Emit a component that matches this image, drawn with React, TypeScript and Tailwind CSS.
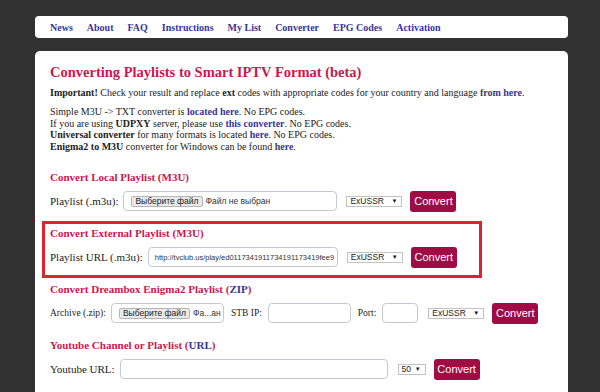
import React from "react";

const navItems = ["News", "About", "FAQ", "Instructions", "My List", "Converter", "EPG Codes", "Activation"];

const SANS = "font-['Liberation_Sans',Arial,sans-serif]";

function Link({ children }: { children: React.ReactNode }) {
  return <span className="font-bold text-[#36369a]">{children}</span>;
}

function Heading({ children, className = "" }: { children: React.ReactNode; className?: string }) {
  return <h3 className={`text-[11px] leading-[14px] font-bold text-[#c5194f] ${className}`}>{children}</h3>;
}

function FileInput({ width, note }: { width: string; note: string }) {
  return (
    <div className={`${width} ${SANS} h-[20px] flex items-center rounded-[4px] border border-[#c3cbd2] bg-white pl-[7px] overflow-hidden`}>
      <div className="h-[11px] flex items-center px-[3px] bg-[#e9e9e9] border border-[#b5b5b5] rounded-[2px] text-[8.5px] text-[#222] whitespace-nowrap">
        Выберите файл
      </div>
      <span className="ml-[3px] text-[8.5px] text-[#333] whitespace-nowrap">{note}</span>
    </div>
  );
}

function TextInput({ width, value = "" }: { width: string; value?: string }) {
  return (
    <div className={`${width} ${SANS} h-[20px] flex items-center rounded-[4px] border border-[#c3cbd2] bg-white px-[6px] overflow-hidden`}>
      <span className="text-[7.5px] text-[#333] whitespace-nowrap">{value}</span>
    </div>
  );
}

function Select({ width, label }: { width: string; label: string }) {
  return (
    <div className={`${width} ${SANS} h-[11px] flex items-center justify-between border border-[#c2c2c2] bg-white pl-[3px] pr-[4px]`}>
      <span className="text-[8.5px] text-[#222] leading-none">{label}</span>
      <span className="text-[6px] text-[#111] leading-none">▼</span>
    </div>
  );
}

function ConvertButton() {
  return (
    <button className={`${SANS} w-[46px] h-[21px] rounded-[3px] bg-[#a00b43] text-white text-[11px] leading-none`}>
      Convert
    </button>
  );
}

export default function App() {
  return (
    <div className="min-h-screen bg-[#323232] pt-[16px] pl-[35px] text-[#222] font-['Liberation_Serif','Times_New_Roman',serif]">
      <nav className="w-[533px] h-[22px] bg-white rounded-[4px] flex items-center gap-[14px] pl-[15px]">
        {navItems.map((n) => (
          <span key={n} className="text-[10px] font-bold text-[#36369a]">{n}</span>
        ))}
      </nav>

      <main className="mt-[13px] w-[533px] bg-white rounded-t-[5px] pt-[12px] pl-[15px] pb-[30px]">
        <h1 className="text-[14.5px] leading-[18px] font-bold text-[#c5194f]">
          Converting Playlists to Smart IPTV Format (beta)
        </h1>
        <p className="mt-[6px] text-[10px] leading-[12px]">
          <b>Important!</b> Check your result and replace <b>ext</b> codes with appropriate codes for your country and language <Link>from here</Link>.
        </p>
        <div className="mt-[7px] text-[10px] leading-[11.7px]">
          <p>Simple M3U -&gt; TXT converter is <Link>located here</Link>. No EPG codes.</p>
          <p>If you are using <b>UDPXY</b> server, please use <Link>this converter</Link>. No EPG codes.</p>
          <p><b>Universal converter</b> for many formats is located <Link>here</Link>. No EPG codes.</p>
          <p><b>Enigma2 to M3U</b> converter for Windows can be found <Link>here</Link>.</p>
        </div>

        <Heading className="mt-[17px]">Convert Local Playlist (M3U)</Heading>
        <div className="mt-[7px] h-[21px] flex items-center text-[11px] whitespace-nowrap">
          <span className="mr-[5px]">Playlist (.m3u):</span>
          <FileInput width="w-[214px]" note="Файл не выбран" />
          <div className="ml-[9px]"><Select width="w-[56px]" label="ExUSSR" /></div>
          <div className="ml-[8px]"><ConvertButton /></div>
        </div>

        <div className="mt-[9px] -ml-[8px] w-[440px] border-[3px] border-[#e3202b] pl-[5px] pt-[2px] pb-[7px]">
          <Heading>Convert External Playlist (M3U)</Heading>
          <div className="mt-[7px] h-[21px] flex items-center text-[11px] whitespace-nowrap">
            <span className="mr-[5px]">Playlist URL (.m3u):</span>
            <TextInput width="w-[190px]" value="http://tvclub.us/play/ed0117341911734191173419fee9" />
            <div className="ml-[9px]"><Select width="w-[56px]" label="ExUSSR" /></div>
            <div className="ml-[8px]"><ConvertButton /></div>
          </div>
        </div>

        <Heading className="mt-[4px]">
          Convert Dreambox Enigma2 Playlist (<span className="text-[#36369a]">ZIP</span>)
        </Heading>
        <div className="mt-[7px] h-[21px] flex items-center text-[9.5px] whitespace-nowrap">
          <span className="mr-[5px]">Archive (.zip):</span>
          <FileInput width="w-[113px]" note="Фа...ан" />
          <span className="ml-[7px] mr-[6px]">STB IP:</span>
          <TextInput width="w-[83px]" />
          <span className="ml-[7px] mr-[6px]">Port:</span>
          <TextInput width="w-[36px]" />
          <div className="ml-[10px]"><Select width="w-[56px]" label="ExUSSR" /></div>
          <div className="ml-[8px]"><ConvertButton /></div>
        </div>

        <Heading className="mt-[14px]">
          Youtube Channel or Playlist (<span className="text-[#36369a]">URL</span>)
        </Heading>
        <div className="mt-[7px] h-[21px] flex items-center text-[11px] whitespace-nowrap">
          <span className="mr-[5px]">Youtube URL:</span>
          <TextInput width="w-[268px]" />
          <div className="ml-[10px]"><Select width="w-[28px]" label="50" /></div>
          <div className="ml-[8px]"><ConvertButton /></div>
        </div>
      </main>
    </div>
  );
}
